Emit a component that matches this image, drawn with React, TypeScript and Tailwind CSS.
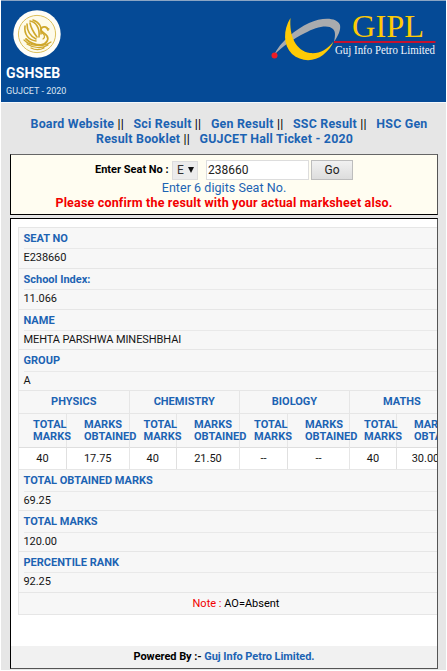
import React from "react";

const LINK = "text-[#1c63b3]";

function Seal() {
  return (
    <svg className="block h-[48px] w-[48px]" viewBox="0 0 48 48" fill="none">
      <circle cx="24" cy="24" r="23.7" fill="#fffef8" />
      <circle cx="24" cy="24" r="18.6" fill="#fefbea" stroke="#dcc05c" strokeWidth="1" />
      <g stroke="#cfa82c" strokeLinecap="round" strokeLinejoin="round">
        <path d="M12 16c-1 8 3 14 11 15M14 14c0 7 3 12 9 15" strokeWidth="1.6" />
        <path d="M17 13c1 6 4 10 7 14M17 11c6 1 10 7 9 16M20 10c6 2 9 7 8 14" strokeWidth="1.6" />
        <path d="M35 20c-1-4-6-4-7-1s4 4 6 7 0 8-6 9c-6 0-11-2-15-6" strokeWidth="1.8" />
        <path d="M34 18l2 1M29 23c2 1 4 4 1 6" strokeWidth="1.2" />
        <path d="M11 30c6 6 18 8 27 2M14 34c6 4 15 5 21 1M18 38c4 2 9 2 13 0" strokeWidth="1.2" />
      </g>
    </svg>
  );
}

function CompanyLogo() {
  return (
    <svg className="block h-[52px] w-[168px]" viewBox="0 0 168 52">
      <path
        d="M3 44C9 31 25 18 38 12 51 6 66 6 69 14c1 5-2 11-6 17 1-5 2-10-1-13-5-5-17-2-28 4C22 28 11 36 3 44Z"
        fill="#a9abae"
      />
      <path
        d="M19.5 7C12 19 12 34 21 43c9 8 22 8 31 1 5-4 9-9 10.500-13.500C56 39 48 43 39 42 25 40 18 25 19.500 7Z"
        fill="#ffca05"
      />
      <circle cx="3.5" cy="44.5" r="3" fill="#ee1c25" />
      <rect x="63" y="30" width="101.5" height="2" fill="#c4122f" />
      <text x="81" y="25.5" fill="#ffca05" fontSize="30.5" textLength="72" lengthAdjust="spacingAndGlyphs" fontFamily="Liberation Serif, serif">
        GIPL
      </text>
      <text x="64" y="43" fill="#f1f5fb" fontSize="11.5" textLength="100" lengthAdjust="spacingAndGlyphs" fontFamily="Liberation Serif, serif">
        Guj Info Petro Limited
      </text>
    </svg>
  );
}

function Field({ label, value }: { label: string; value: string }) {
  return (
    <div className="h-[40.8px] border-t border-[#e6e6e6] pl-[4.5px]">
      <div className="h-[20.4px] text-[11px] font-bold leading-[22px] text-[#1c63b3]">{label}</div>
      <div className="h-[19.4px] border-t border-[#e9e9e9] text-[11px] leading-[18px] tracking-[-0.08px] text-[#151515]">
        {value}
      </div>
    </div>
  );
}

const subjects = [
  { name: "PHYSICS", total: "40", marks: "17.75", width: "w-[110.5px]", first: "w-[48px]" },
  { name: "CHEMISTRY", total: "40", marks: "21.50", width: "w-[110.5px]", first: "w-[47.5px]" },
  { name: "BIOLOGY", total: "--", marks: "--", width: "w-[110px]", first: "w-[48px]" },
  { name: "MATHS", total: "40", marks: "30.00", width: "w-[105px]", first: "w-[47px]" },
];

function Subject({ name, total, marks, width, first }: (typeof subjects)[number]) {
  return (
    <div className={`${width} shrink-0 border-r border-[#e6e6e6]`}>
      <div className="h-[22.6px] border-t border-[#e6e6e6] text-center text-[11px] font-bold leading-[22px] text-[#1c63b3]">
        {name}
      </div>
      <div className="flex h-[34.4px] border-t border-[#e6e6e6] text-[11px] font-bold leading-[12px] text-[#1c63b3]">
        <div className={`${first} shrink-0 border-r border-[#e6e6e6] pl-[14px] pt-[5px]`}>
          TOTAL
          <br />
          MARKS
        </div>
        <div className="pl-[17px] pt-[5px]">
          MARKS
          <br />
          OBTAINED
        </div>
      </div>
      <div className="flex h-[22.2px] border-t border-[#dedede] bg-white text-center text-[11px] leading-[22px] text-[#151515]">
        <div className={`${first} shrink-0 border-r border-[#e0e0e0]`}>{total}</div>
        <div className="flex-1">{marks}</div>
      </div>
    </div>
  );
}

const firstLinks = ["Board Website", "Sci Result", "Gen Result", "SSC Result"];

function Divider() {
  return <span className="mr-[9.5px] font-normal text-black"> ||</span>;
}

export default function App() {
  return (
    <div className="h-[671px] w-[447px] overflow-hidden bg-white pl-px font-['Roboto',sans-serif] text-black">
      <div className="flex h-[670px] w-[445px] flex-col bg-[#e6e6e6]">
        <header className="flex h-[103px] shrink-0 justify-between border-b border-t border-b-[#f4f8fc] border-t-[#8ba5c4] bg-[#054a96] text-white">
          <div className="pl-[5px] pt-[9px]">
            <div className="pl-[7px]">
              <Seal />
            </div>
            <div className="mt-[6px] text-[14px] font-bold leading-[18px] tracking-[0.15px]">GSHSEB</div>
            <div className="mt-px text-[9px] leading-[16px] text-[#d9e5f3]">GUJCET - 2020</div>
          </div>
          <div className="pr-[7px] pt-[10px]">
            <CompanyLogo />
          </div>
        </header>

        <nav className="h-[51px] shrink-0 whitespace-nowrap pt-[14px] text-[12.4px] font-bold leading-[14.5px] tracking-[0.22px] text-[#1c63b3]">
          <div className="pl-[29.5px]">
            {firstLinks.map((item) => (
              <React.Fragment key={item}>
                <a>{item}</a>
                <Divider />
              </React.Fragment>
            ))}
            <a>HSC Gen</a>
          </div>
          <div className="pl-[95px]">
            <a>Result Booklet</a>
            <Divider />
            <a>GUJCET Hall Ticket - 2020</a>
          </div>
        </nav>

        <main className="ml-[9px] w-[428px]">
          <section className="h-[61px] whitespace-nowrap border border-black border-r-[#555] border-t-[#666] bg-[#fffdf1] pt-[5px]">
            <div className="flex h-[20px] items-center pl-[84px]">
              <label className="w-[77px] text-[11px] font-bold">Enter Seat No :</label>
              <div className="flex h-[19px] w-[26px] items-center gap-[4px] border border-[#ddd] bg-[#ececec] pl-[4px] text-[12px] text-[#333]">
                E
                <svg className="h-[6px] w-[6px]" viewBox="0 0 6 6">
                  <path d="M0 0h6L3 6Z" fill="#111" />
                </svg>
              </div>
              <div className="ml-[8px] h-[20px] w-[103px] border border-[#ddd] bg-white pl-px text-[12px] leading-[19px] text-[#222]">
                238660
              </div>
              <button className="ml-[2px] h-[20px] w-[42px] border border-[#bdbdbd] bg-linear-to-b from-[#f1f1f1] to-[#dddddd] text-[12px] leading-[18px] text-[#222]">
                Go
              </button>
            </div>
            <div className={`text-center text-[12.5px] leading-[15px] tracking-[0.05px] ${LINK}`}>
              Enter 6 digits Seat No.
            </div>
            <div className="text-center text-[12.5px] font-bold leading-[15px] tracking-[0.18px] text-[#f20000]">
              Please confirm the result with your actual marksheet also.
            </div>
          </section>

          <section className="mt-[3px] flex h-[451px] flex-col border border-black border-r-[#555] border-b-[#555] bg-white pt-[8px]">
            <div className="ml-[7px] overflow-hidden whitespace-nowrap border-b border-l border-[#e6e6e6] bg-[#f7f7f7]">
              <Field label="SEAT NO" value="E238660" />
              <Field label="School Index:" value="11.066" />
              <Field label="NAME" value="MEHTA PARSHWA MINESHBHAI" />
              <Field label="GROUP" value="A" />
              <div className="flex">
                {subjects.map((subject) => (
                  <Subject key={subject.name} {...subject} />
                ))}
              </div>
              <Field label="TOTAL OBTAINED MARKS" value="69.25" />
              <Field label="TOTAL MARKS" value="120.00" />
              <Field label="PERCENTILE RANK" value="92.25" />
              <div className="h-[22px] border-t border-[#e6e6e6] text-center text-[11px] leading-[22px]">
                <span className="pl-[16px] text-[#f20000]">Note :</span> AO=Absent
              </div>
            </div>
            <footer className="mt-auto h-[22px] bg-[#f1f1f1] text-center text-[11px] font-bold leading-[22px] tracking-[-0.05px]">
              Powered By :- <span className={LINK}>Guj Info Petro Limited.</span>
            </footer>
          </section>
        </main>
      </div>
    </div>
  );
}
